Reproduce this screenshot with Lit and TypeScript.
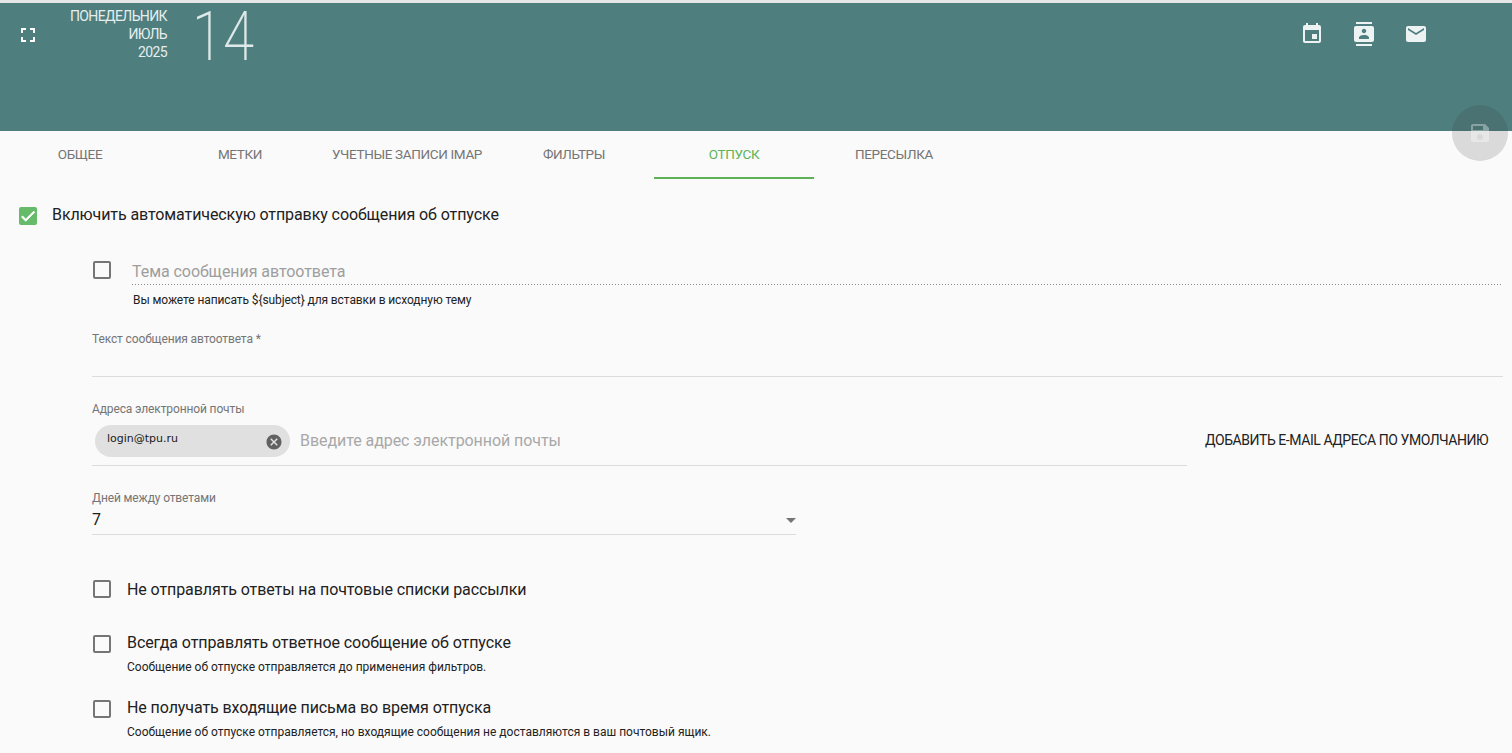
import { LitElement, html, css } from "lit";
import { customElement } from "lit/decorators.js";

const icon = (d: string) => html`<svg viewBox="0 0 24 24" aria-hidden="true"><path d=${d}></path></svg>`;
const P = {
  fullscreen: "M7 14H5v5h5v-2H7v-3zm-2-4h2V7h3V5H5v5zm12 7h-3v2h5v-5h-2v3zM14 5v2h3v3h2V5h-5z",
  event: "M17 12h-5v5h5v-5zM16 1v2H8V1H6v2H5c-1.11 0-1.99.9-1.99 2L3 19c0 1.1.89 2 2 2h14c1.1 0 2-.9 2-2V5c0-1.1-.9-2-2-2h-1V1h-2zm3 18H5V8h14v11z",
  contacts: "M20 0H4v2h16V0zM4 24h16v-2H4v2zM20 4H4c-1.1 0-2 .9-2 2v12c0 1.1.9 2 2 2h16c1.1 0 2-.9 2-2V6c0-1.1-.9-2-2-2zm-8 2.75c1.24 0 2.25 1.01 2.25 2.25s-1.01 2.25-2.25 2.25S9.75 10.24 9.75 9 10.76 6.75 12 6.75zM17 17H7v-1.5c0-1.67 3.33-2.5 5-2.5s5 .83 5 2.5V17z",
  email: "M20 4H4c-1.1 0-1.99.9-1.99 2L2 18c0 1.1.9 2 2 2h16c1.1 0 2-.9 2-2V6c0-1.1-.9-2-2-2zm0 4l-8 5-8-5V6l8 5 8-5v2z",
  save: "M17 3H5c-1.11 0-2 .9-2 2v14c0 1.1.89 2 2 2h14c1.1 0 2-.9 2-2V7l-4-4zm-5 16c-1.66 0-3-1.34-3-3s1.34-3 3-3 3 1.34 3 3-1.34 3-3 3zm3-10H5V5h10v4z",
  cancel: "M12 2C6.47 2 2 6.47 2 12s4.47 10 10 10 10-4.47 10-10S17.53 2 12 2zm5 13.59L15.59 17 12 13.41 8.41 17 7 15.59 10.59 12 7 8.41 8.41 7 12 10.59 15.59 7 17 8.41 13.41 12 17 15.59z",
  check: "M9 16.17L4.83 12l-1.41 1.41L9 19 21 7l-1.41-1.41z",
};

@customElement("app-root")
export class AppRoot extends LitElement {
  static styles = css`
    :host { display: block; width: 1512px; height: 753px; overflow: hidden; position: relative; background: #fafafa;
      font-family: Roboto, "Noto Sans", sans-serif; color: #212121; box-sizing: border-box; padding-top: 3px; }
    :host::before { content: ""; position: absolute; left: 0; top: 0; width: 100%; height: 3px; background: #e6e6e6; }
    svg { display: block; fill: currentColor; }
    .head { height: 128px; background: #4e7e7e; display: flex; align-items: flex-start; color: #fff; }
    .fs { width: 24px; height: 24px; margin: 20px 0 0 16px; }
    .fs svg { width: 24px; height: 24px; }
    .date { width: 127px; text-align: right; font-size: 14px; line-height: 18px; padding-top: 4px; color: #e6eeee; letter-spacing: -.6px; }
    .num { margin-left: 25px; font-size: 68px; font-weight: 200; line-height: 68px; color: #dfe9e9; transform: scaleX(.83); transform-origin: left center; }
    .tools { margin-left: auto; margin-right: 84px; display: flex; gap: 28px; padding-top: 19px; color: #edf3f3; }
    .tools svg { width: 24px; height: 24px; }
    .fab { position: absolute; left: 1452px; top: 105px; width: 56px; height: 56px; border-radius: 50%; background: rgba(60,60,60,.17);
      display: flex; align-items: center; justify-content: center; color: rgba(255,255,255,.35); }
    .fab svg { width: 24px; height: 24px; }
    .tabs { display: flex; height: 48px; }
    .tab { width: 160px; flex: none; text-align: center; font-size: 13.5px; letter-spacing: -.35px; line-height: 46px; color: #757575; box-sizing: border-box; height: 48px; white-space: nowrap; }
    .tab.wide { width: 174px; }
    .tab.on { color: #5cb356; border-bottom: 2px solid #5cb356; }
    .main { padding: 28px 9px 0 19px; }
    .row { display: flex; align-items: center; }
    .box { width: 18px; height: 18px; flex: none; box-sizing: border-box; border: 2px solid #757575; border-radius: 2px; }
    .box.on { background: #66bb6a; border: 0; color: #fff; }
    .box.on svg { width: 18px; height: 18px; stroke: #fff; stroke-width: 1.2; }
    .lbl { font-size: 16px; line-height: 20px; color: #212121; letter-spacing: -.09px; }
    .enable { height: 18px; }
    .enable .lbl { margin: -2px 0 0 15px; }
    .sec { padding-left: 73px; }
    .subj { display: flex; margin-top: 36px; align-items: flex-start; }
    .subj .box { margin-left: 1px; }
    .subj-body { flex: 1; margin-left: 21px; }
    .ph { font-size: 16px; line-height: 24px; color: #9e9e9e; letter-spacing: -.06px; }
    .subj .ph { height: 23px; padding-bottom: 1px; line-height: 22px;
      background: linear-gradient(to right, #8a8a8a 0, #8a8a8a 33%, transparent 0) left bottom / 3px 1px repeat-x; }
    .hint { font-size: 12px; line-height: 14px; color: #222; }
    .subj .hint { margin: 8px 0 0 1px; letter-spacing: -.1px; }
    .cap { font-size: 12px; line-height: 14px; color: #757575; letter-spacing: -.13px; }
    .text { margin-top: 25px; height: 44px; border-bottom: 1px solid #dcdcdc; }
    .addr { display: flex; margin-top: 25px; }
    .addr-f { width: 1095px; flex: none; height: 63px; border-bottom: 1px solid #dcdcdc; }
    .chiprow { display: flex; align-items: center; margin-top: 3px; padding-top: 6px; padding-left: 3px; }
    .chip { width: 195px; height: 32px; box-sizing: border-box; border-radius: 16px; background: #e0e0e0; display: flex; padding: 0 7px 0 12px; justify-content: space-between; align-items: center; }
    .chip span { font-family: "DejaVu Sans", sans-serif; font-size: 11px; line-height: 13px; color: #1a1a1a; margin-top: -6px; }
    .chip svg { width: 18px; height: 18px; color: #616161; margin-top: 1px; }
    .chiprow .ph { margin-left: 10px; color: #a8a8a8; }
    .btn { margin: 29px 0 0 18px; font-size: 14px; letter-spacing: -.43px; line-height: 18px; color: #212121; white-space: nowrap; }
    .days { margin-top: 25px; width: 704px; height: 43px; border-bottom: 1px solid #dcdcdc; }
    .val { font-size: 16px; line-height: 20px; margin-top: 5px; color: #212121; display: flex; justify-content: space-between; align-items: center; }
    .caret { width: 0; height: 0; border: 5px solid transparent; border-top-color: #757575; border-bottom: 0; }
    .opt { display: flex; padding-left: 1px; }
    .opt .box { margin-right: 16px; }
    .o1 { margin-top: 45px; }
    .o2 { margin-top: 37px; }
    .o3 { margin-top: 26px; }
    .opt .lbl { margin-top: -2px; }
    .o1 .lbl { margin-top: 0; margin-bottom: -2px; }
    .opt .hint { margin-top: 7px; }
  `;

  render() {
    return html`
      <div class="head">
        <div class="fs">${icon(P.fullscreen)}</div>
        <div class="date">ПОНЕДЕЛЬНИК<br />ИЮЛЬ<br />2025</div>
        <div class="num">14</div>
        <div class="tools">${icon(P.event)}${icon(P.contacts)}${icon(P.email)}</div>
      </div>
      <div class="fab">${icon(P.save)}</div>
      <div class="tabs">
        <div class="tab">ОБЩЕЕ</div><div class="tab">МЕТКИ</div><div class="tab wide">УЧЕТНЫЕ ЗАПИСИ IMAP</div>
        <div class="tab">ФИЛЬТРЫ</div><div class="tab on">ОТПУСК</div><div class="tab">ПЕРЕСЫЛКА</div>
      </div>
      <div class="main">
        <div class="row enable"><div class="box on">${icon(P.check)}</div><div class="lbl">Включить автоматическую отправку сообщения об отпуске</div></div>
        <div class="sec">
          <div class="subj"><div class="box"></div><div class="subj-body"><div class="ph">Тема сообщения автоответа</div><div class="hint">Вы можете написать \${subject} для вставки в исходную тему</div></div></div>
          <div class="text cap">Текст сообщения автоответа *</div>
          <div class="addr">
            <div class="addr-f"><div class="cap">Адреса электронной почты</div>
              <div class="chiprow"><div class="chip"><span>login@tpu.ru</span>${icon(P.cancel)}</div><div class="ph">Введите адрес электронной почты</div></div></div>
            <div class="btn">ДОБАВИТЬ E-MAIL АДРЕСА ПО УМОЛЧАНИЮ</div>
          </div>
          <div class="days"><div class="cap">Дней между ответами</div><div class="val">7<i class="caret"></i></div></div>
          <div class="opt o1"><div class="box"></div><div class="lbl">Не отправлять ответы на почтовые списки рассылки</div></div>
          <div class="opt o2"><div class="box"></div><div><div class="lbl">Всегда отправлять ответное сообщение об отпуске</div><div class="hint">Сообщение об отпуске отправляется до применения фильтров.</div></div></div>
          <div class="opt o3"><div class="box"></div><div><div class="lbl">Не получать входящие письма во время отпуска</div><div class="hint">Сообщение об отпуске отправляется, но входящие сообщения не доставляются в ваш почтовый ящик.</div></div></div>
        </div>
      </div>
    `;
  }
}
